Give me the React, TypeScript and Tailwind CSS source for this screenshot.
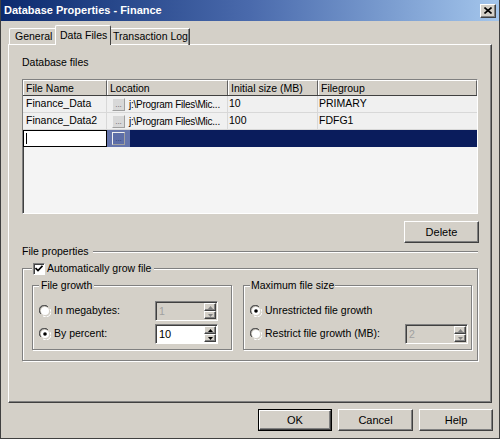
import React from "react";

const raised =
  "border border-t-white border-l-white border-r-[#404040] border-b-[#404040] shadow-[inset_-1px_-1px_0_#808080]";
const sunken =
  "border border-t-[#808080] border-l-[#808080] border-r-white border-b-white shadow-[inset_1px_1px_0_#404040]";
const etched =
  "border border-[#808080] shadow-[inset_1px_1px_0_#ffffff,1px_1px_0_#ffffff]";

function Radio({ checked }: { checked?: boolean }) {
  return (
    <svg width="12" height="12" viewBox="0 0 12 12" className="shrink-0">
      <path d="M1 8 A5 5 0 0 1 8 1" fill="none" stroke="#808080" />
      <path d="M2 9 A4 4 0 0 1 9 2" fill="none" stroke="#404040" />
      <path d="M11 4 A5 5 0 0 1 4 11" fill="none" stroke="#ffffff" />
      <circle cx="6" cy="6" r="4" fill="#ffffff" />
      {checked && <circle cx="6" cy="6" r="1.8" fill="#000000" />}
    </svg>
  );
}

function Arrow({ up, disabled }: { up?: boolean; disabled?: boolean }) {
  return (
    <div className={`flex-1 flex items-center justify-center bg-[#d4d0c8] ${raised}`}>
      <svg width="5" height="3" viewBox="0 0 5 3">
        <path d={up ? "M0 3 L2.5 0 L5 3 Z" : "M0 0 L2.5 3 L5 0 Z"} fill={disabled ? "#808080" : "#000000"} />
      </svg>
    </div>
  );
}

function Spinner({ value, disabled, w }: { value: string; disabled?: boolean; w: string }) {
  return (
    <div className={`flex h-[20px] shrink-0 ${w} ${sunken} ${disabled ? "bg-[#d4d0c8]" : "bg-white"}`}>
      <div className={`flex-1 pl-[3px] pt-[2px] leading-[14px] ${disabled ? "text-[#a0a0a0]" : "text-black text-[11px]"}`}>
        {value}
      </div>
      <div className="flex flex-col w-[13px] pt-[1px] pb-[1px] pr-[1px]">
        <Arrow up disabled={disabled} />
        <Arrow disabled={disabled} />
      </div>
    </div>
  );
}

function Btn({ label, def, w }: { label: string; def?: boolean; w: string }) {
  return (
    <div className={`${w} h-[22px] shrink-0 ${def ? "border border-black" : ""}`}>
      <div className={`h-full flex items-center justify-center bg-[#d4d0c8] ${raised}`}>
        <span className="text-[11px] text-black">{label}</span>
      </div>
    </div>
  );
}

function Ellipsis({ active }: { active?: boolean }) {
  return (
    <div
      className={`w-[13px] h-[13px] shrink-0 flex items-end justify-center text-[8px] leading-[8px] pb-[1px] ${
        active ? "bg-[#5d6ea8] text-[#2a3a70]" : "bg-[#d8d8d8] text-[#606060]"
      } border border-t-[#f0f0f0] border-l-[#f0f0f0] border-r-[#a0a0a0] border-b-[#a0a0a0]`}
    >
      ...
    </div>
  );
}

export default function App() {
  const rows = [
    { name: "Finance_Data", loc: "j:\\Program Files\\Mic...", size: "10", fg: "PRIMARY" },
    { name: "Finance_Data2", loc: "j:\\Program Files\\Mic...", size: "100", fg: "FDFG1" },
  ];
  return (
    <div
      className="w-[500px] h-[439px] bg-[#d4d0c8] border-l border-r border-b border-[#404040] flex flex-col text-[10.5px] text-black overflow-hidden whitespace-nowrap"
      style={{ fontFamily: '"Liberation Sans", Arial, sans-serif' }}
    >
      {/* Title bar */}
      <div className="h-[21px] shrink-0 flex items-center bg-gradient-to-r from-[#0b2a6e] via-[#4a6aac] to-[#a4c6ec] pl-[3px] pr-[3px]">
        <span className="text-white font-bold text-[11px]">Database Properties - Finance</span>
        <div className={`ml-auto w-[16px] h-[14px] flex items-center justify-center bg-[#d4d0c8] ${raised}`}>
          <svg width="8" height="7" viewBox="0 0 8 7">
            <path d="M0.5 0.5 L7.5 6.5 M7.5 0.5 L0.5 6.5" stroke="#000" strokeWidth="1.6" />
          </svg>
        </div>
      </div>

      <div className="flex-1 flex flex-col px-[7px] pt-[4px]">
        {/* Tabs */}
        <div className="flex items-end h-[20px] shrink-0 pl-[1px] -mb-[1px] relative z-10">
          <div className="w-[46px] h-[17px] border-t border-l border-t-white border-l-white rounded-tl-[2px] flex items-center pl-[5px]">
            General
          </div>
          <div className="w-[56px] h-[20px] bg-[#d4d0c8] border-t border-l border-r border-t-white border-l-white border-r-[#404040] rounded-t-[2px] flex items-start pt-[2px] pl-[4px]">
            Data Files
          </div>
          <div className="w-[79px] h-[17px] border-t border-r border-t-white border-r-[#404040] shadow-[inset_-1px_0_0_#808080] flex items-center pl-[2px]">
            Transaction Log
          </div>
        </div>

        {/* Panel */}
        <div className={`w-[484px] h-[359px] shrink-0 flex flex-col pl-[13px] pr-[13px] pt-[11px] ${raised}`}>
          <div className="leading-[13px]">Database files</div>

          {/* Grid */}
          <div className={`mt-[10px] w-[456px] h-[135px] shrink-0 bg-[#f4f4f4] flex flex-col ${sunken}`}>
            <div className="grid grid-cols-[84px_121px_90px_1fr] h-[16px] shrink-0 border-b border-[#404040]">
              {["File Name", "Location", "Initial size (MB)", "Filegroup"].map((h) => (
                <div key={h} className="bg-[#d4d0c8] pl-[2px] leading-[14px] border-l border-t border-l-white border-t-white border-r border-r-[#606060] overflow-hidden">
                  {h}
                </div>
              ))}
            </div>
            {rows.map((r) => (
              <div key={r.name} className="grid grid-cols-[84px_121px_90px_1fr] h-[17px] shrink-0 border-b border-[#d8d8d8] bg-[#f0f0f0] overflow-hidden">
                <div className="pl-[3px] flex items-center border-r border-[#d8d8d8] overflow-hidden">{r.name}</div>
                <div className="flex items-center border-r border-[#d8d8d8] pl-[5px] gap-[4px] overflow-hidden">
                  <Ellipsis />
                  <span className="text-[10px] tracking-[-0.25px]">{r.loc}</span>
                </div>
                <div className="pl-[1px] flex items-center border-r border-[#d8d8d8]">{r.size}</div>
                <div className="pl-[1px] flex items-center">{r.fg}</div>
              </div>
            ))}
            <div className="grid grid-cols-[84px_121px_90px_1fr] h-[17px] shrink-0">
              <div className="bg-white border border-black flex items-center pl-[2px]">
                <div className="w-[1px] h-[11px] bg-black" />
              </div>
              <div className="flex bg-[#0a1c5c]">
                <div className="w-[23px] bg-[#6474ac] flex items-center justify-center">
                  <Ellipsis active />
                </div>
              </div>
              <div className="bg-[#0a1c5c]" />
              <div className="bg-[#0a1c5c]" />
            </div>
          </div>

          {/* Delete */}
          <div className="flex justify-end mt-[7px] -mr-[1px] shrink-0">
            <Btn label="Delete" w="w-[75px]" />
          </div>

          {/* File properties */}
          <div className="flex items-center mt-[2px] h-[13px] shrink-0">
            <span className="leading-[13px]">File properties</span>
            <div className="flex-1 ml-[4px] h-[2px] border-t border-[#808080] border-b border-b-white" />
          </div>

          {/* Outer group */}
          <div className={`relative mt-[10px] w-[456px] h-[93px] shrink-0 ${etched} flex gap-[11px] pt-[16px] pl-[9px]`}>
            <div className="absolute -top-[7px] left-[9px] flex items-center gap-[2px] bg-[#d4d0c8] pl-[1px] pr-[3px]">
              <div className={`w-[12px] h-[12px] bg-white ${sunken} flex items-center justify-center`}>
                <svg width="8" height="7" viewBox="0 0 8 7">
                  <path d="M0.5 3 L3 5.5 L7.5 0.8" fill="none" stroke="#000" strokeWidth="1.7" />
                </svg>
              </div>
              <span className="leading-[13px]">Automatically grow file</span>
            </div>

            {/* File growth */}
            <div className={`relative w-[200px] h-[65px] ${etched} flex flex-col gap-[3px] pt-[15px] pl-[6px]`}>
              <span className="absolute -top-[7px] left-[6px] bg-[#d4d0c8] px-[2px] leading-[13px]">File growth</span>
              <div className="flex items-center h-[20px]">
                <Radio />
                <span className="ml-[3px] w-[101px]">In megabytes:</span>
                <Spinner value="1" disabled w="w-[63px]" />
              </div>
              <div className="flex items-center h-[20px]">
                <Radio checked />
                <span className="ml-[3px] w-[101px]">By percent:</span>
                <Spinner value="10" w="w-[63px]" />
              </div>
            </div>

            {/* Maximum file size */}
            <div className={`relative w-[229px] h-[65px] ${etched} flex flex-col gap-[3px] pt-[15px] pl-[6px]`}>
              <span className="absolute -top-[7px] left-[6px] bg-[#d4d0c8] px-[1px] leading-[13px]">Maximum file size</span>
              <div className="flex items-center h-[20px]">
                <Radio checked />
                <span className="ml-[3px]">Unrestricted file growth</span>
              </div>
              <div className="flex items-center h-[20px]">
                <Radio />
                <span className="ml-[3px] w-[140px]">Restrict file growth (MB):</span>
                <Spinner value="2" disabled w="w-[63px]" />
              </div>
            </div>
          </div>
        </div>

        {/* Bottom buttons */}
        <div className="flex justify-end gap-[6px] mt-[6px] -mr-[1px] shrink-0">
          <Btn label="OK" def w="w-[74px]" />
          <Btn label="Cancel" w="w-[75px]" />
          <Btn label="Help" w="w-[74px]" />
        </div>
      </div>
    </div>
  );
}
